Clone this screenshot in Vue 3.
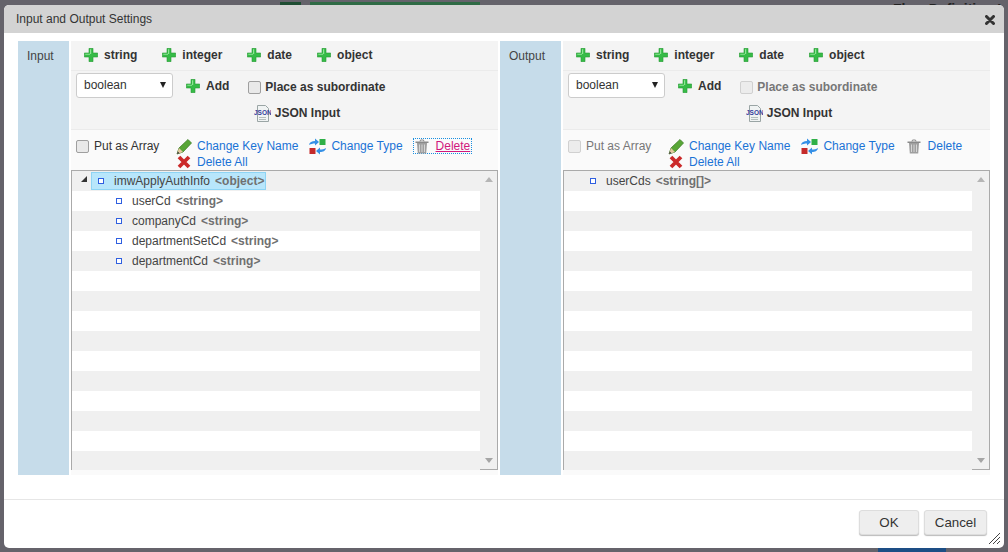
<script setup>
const types = ['string', 'integer', 'date', 'object']
const panels = [
  {
    key: 'in', label: 'Input', labelClass: 'label-in', disabled: false, focusDelete: true,
    rows: [
      { name: 'imwApplyAuthInfo', type: '<object>', level: 0, selected: true },
      { name: 'userCd', type: '<string>', level: 1 },
      { name: 'companyCd', type: '<string>', level: 1 },
      { name: 'departmentSetCd', type: '<string>', level: 1 },
      { name: 'departmentCd', type: '<string>', level: 1 },
    ],
  },
  {
    key: 'out', label: 'Output', labelClass: 'label-out', disabled: true, focusDelete: false,
    rows: [{ name: 'userCds', type: '<string[]>', level: 0, leaf: true }],
  },
]
const rowCount = 15
function rowsFor(p) {
  return Array.from({ length: rowCount }, (_, i) => p.rows[i] || null)
}
</script>

<template>
  <div class="page">
    <div class="bg-bar bar-a"></div>
    <div class="bg-bar bar-b"></div>
    <div class="bg-title">Flow Definition I</div>
    <div class="bg-bar bar-c"></div>
    <div class="dialog">
      <header class="title">
        <span>Input and Output Settings</span>
        <svg class="close" viewBox="0 0 10 10" width="10" height="10"><path d="M1.5 1.5 8.5 8.5M8.5 1.5 1.5 8.5" stroke="#333" stroke-width="3" stroke-linecap="round"/></svg>
      </header>
      <main class="body">
        <section v-for="p in panels" :key="p.key" class="panel">
          <div class="side" :class="p.labelClass">{{ p.label }}</div>
          <div class="content">
            <div class="row-types">
              <span v-for="t in types" :key="t" class="add-type">
                <svg class="plus" viewBox="0 0 14 14" width="14" height="14"><path d="M5 0.300h4V5h4.700v4H9v4.700H5V9H0.300V5H5z" fill="#36bb47" stroke="#2a9a38" stroke-width=".6"/><path d="M6 1.300h1.200V6H6zM1.300 5.800H6v1H1.300z" fill="#8fe595"/></svg>
                <b>{{ t }}</b>
              </span>
            </div>
            <div class="row-add">
              <div class="add-line">
                <div class="select-wrap">
                  <select class="type-select"><option>boolean</option></select>
                  <i class="select-arrow"></i>
                </div>
                <span class="add-btn">
                  <svg class="plus" viewBox="0 0 14 14" width="14" height="14"><path d="M5 0.300h4V5h4.700v4H9v4.700H5V9H0.300V5H5z" fill="#36bb47" stroke="#2a9a38" stroke-width=".6"/><path d="M6 1.300h1.200V6H6zM1.300 5.800H6v1H1.300z" fill="#8fe595"/></svg>
                  <b>Add</b>
                </span>
                <label class="check" :class="{ off: p.disabled }">
                  <span class="box"></span>
                  <b>Place as subordinate</b>
                </label>
              </div>
              <div class="json-line">
                <svg viewBox="0 0 17 17" width="17" height="17">
                  <path d="M3.500 .5h8l3 3v13h-11z" fill="#f0f3f3" stroke="#9aa5a5"/>
                  <path d="M5 12.500h7M5 14.500h7" stroke="#b5bdbd"/>
                  <text x="0" y="9.500" font-size="6.500" font-weight="700" font-family="Liberation Sans" fill="#33409c">JSON</text>
                </svg>
                <b>JSON Input</b>
              </div>
            </div>
            <div class="row-actions">
              <label class="check array" :class="{ off: p.disabled }">
                <span class="box"></span>
                <span>Put as Array</span>
              </label>
              <div class="actions">
                <a class="action">
                  <svg viewBox="0 0 17 17" width="17" height="17">
                    <path d="M1 16 3 10 12 1.500 15.500 5 7 14z" fill="#58a636" stroke="#3f7f28" stroke-width=".8"/>
                    <path d="M1 16 3 10 7 14z" fill="#e4c9a0"/>
                    <path d="M1 16 1.800 13.500 3.500 15.200z" fill="#333"/>
                  </svg>
                  <span>Change Key Name</span>
                </a>
                <a class="action type-action">
                  <svg viewBox="0 0 17 17" width="17" height="17">
                    <rect x="10.500" y="1" width="6" height="6" fill="#2fb048"/>
                    <rect x=".5" y="10" width="6" height="6" fill="#c42a2a"/>
                    <path d="M0 7C.5 4 3 3 6 3V.5L10 4 6 7.500V5.500C3.500 5.500 2 6 0 7z" fill="#3590e6"/>
                    <path d="M17 10c-.5 3-3 4-6 4v2.500L7 13l4-3.500v2c2.500 0 4-.5 6-1.500z" fill="#3590e6"/>
                  </svg>
                  <span>Change Type</span>
                </a>
                <a class="action delete" :class="{ focused: p.focusDelete }">
                  <svg viewBox="0 0 14 15" width="14" height="15">
                    <path d="M.5 2.500h13v1.500H.5z" fill="#8a8a8a"/><path d="M5 2.500 5.500 1h3L9 2.500" fill="none" stroke="#8a8a8a"/>
                    <path d="M2 4h10l-.8 10.500H2.800z" fill="#9f9f9f"/>
                    <path d="M4.500 5.500v7.500M7 5.500v7.500M9.500 5.500v7.500" stroke="#dcdcdc" stroke-width=".9"/>
                  </svg>
                  <span class="delete-text">Delete</span>
                </a>
                <a class="action all">
                  <svg viewBox="0 0 14 14" width="14" height="14"><path d="M2 2 12 12M12 2 2 12" stroke="#cb2a2a" stroke-width="3.800"/></svg>
                  <span>Delete All</span>
                </a>
              </div>
            </div>
            <div class="tree">
              <div class="tree-rows">
                <div v-for="(r, i) in rowsFor(p)" :key="i" class="tree-row" :class="{ odd: i % 2 === 0 }">
                  <template v-if="r">
                    <div class="node" :class="'lvl' + r.level">
                      <span v-if="r.selected" class="twist"></span>
                      <div class="node-inner" :class="{ selected: r.selected }">
                        <i class="square"></i>
                        <span class="name">{{ r.name }}</span>
                        <span class="type">{{ r.type }}</span>
                      </div>
                    </div>
                  </template>
                </div>
              </div>
              <div class="scrollbar">
                <span class="arrow up"></span>
                <span class="arrow down"></span>
              </div>
            </div>
            <div class="foot-strip"></div>
          </div>
        </section>
      </main>
      <footer class="footer">
        <button class="btn ok">OK</button>
        <button class="btn cancel">Cancel</button>
        <svg class="grip" viewBox="0 0 12 12" width="12" height="12"><path d="M1 12 12 1M5 12 12 5M9 12 12 9" stroke="#444" stroke-width="1"/></svg>
      </footer>
    </div>
  </div>
</template>

<style scoped>
.page {
  position: relative;
  width: 1008px;
  height: 552px;
  box-sizing: border-box;
  padding: 5px 4px 4px;
  background: #65636b;
  overflow: hidden;
  font-family: "Liberation Sans", Arial, sans-serif;
  font-size: 12px;
  color: #333;
}
.bg-bar { position: absolute; }
.bar-a { left: 280px; top: 2px; width: 21px; height: 3px; background: #1f4e33; }
.bar-b { left: 310px; top: 2px; width: 170px; height: 3px; background: #2f6b45; }
.bar-c { left: 878px; top: 548px; width: 68px; height: 4px; background: #1d4e85; }
.bg-title { position: absolute; left: 893px; top: 1px; font-size: 14px; font-weight: 700; color: #222; white-space: nowrap; }
.dialog {
  position: relative;
  display: flex;
  flex-direction: column;
  height: 543px;
  background: #fff;
  border-radius: 5px;
  overflow: hidden;
}
.title {
  display: flex;
  align-items: center;
  justify-content: space-between;
  height: 28px;
  flex: none;
  padding: 0 9px 0 12px;
  background: #d3d3d3;
}
.close { margin-top: 1px; }
.body {
  display: flex;
  align-items: flex-start;
  gap: 2px;
  padding: 8px 14px 24px;
  flex: none;
}
.panel { display: flex; gap: 2px; height: 434px; }
.side {
  background: #c6dcea;
  padding: 8px 0 0 9px;
  box-sizing: border-box;
  line-height: 14px;
  color: #444;
}
.label-in { width: 51px; }
.label-out { width: 61px; }
.content {
  width: 427px;
  display: flex;
  flex-direction: column;
  background: #fafafa;
}
.row-types {
  display: flex;
  align-items: center;
  height: 30px;
  box-sizing: border-box;
  padding: 0 0 2px 13px;
  background: #f4f4f4;
  border-bottom: 1px solid #ebebeb;
}
.add-type { display: flex; align-items: center; gap: 6px; margin-right: 25px; }
.plus { flex: none; }
b { font-weight: 700; color: #333; }
.row-add {
  height: 59px;
  box-sizing: border-box;
  background: #f4f4f4;
  border-bottom: 1px solid #ebebeb;
  padding: 2px 0 0 5px;
}
.add-line { display: flex; align-items: center; height: 25px; }
.select-wrap { position: relative; width: 97px; height: 25px; flex: none; }
.type-select {
  appearance: none;
  display: block;
  width: 97px;
  height: 25px;
  box-sizing: border-box;
  padding: 0 0 2px 7px;
  border: 1px solid #ccc;
  border-radius: 3px;
  background: #fff;
  font-family: inherit;
  font-size: 12px;
  color: #333;
}
.select-arrow {
  position: absolute;
  right: 7px;
  top: 9px;
  width: 0;
  height: 0;
  border-left: 3px solid transparent;
  border-right: 3px solid transparent;
  border-top: 6px solid #222;
  pointer-events: none;
}
.add-btn { display: flex; align-items: center; gap: 6px; margin-left: 13px; }
.check { display: inline-flex; align-items: center; gap: 5px; }
.add-btn + .check { margin-left: 19px; margin-top: 3px; gap: 4px; }
.box {
  width: 11px;
  height: 11px;
  flex: none;
  border: 1px solid #9f9f9f;
  border-radius: 2px;
  background: #e9e9e9;
}
.check.off .box { border-color: #d0d0d0; background: #ececec; }
.check.off, .check.off b { color: #777; }
.json-line {
  display: flex;
  align-items: center;
  justify-content: center;
  gap: 4px;
  height: 18px;
  margin: 6px 0 0 20px;
}
.row-actions {
  display: flex;
  height: 40px;
  box-sizing: border-box;
  padding: 8px 0 0 5px;
}
.array { width: 100px; height: 14px; flex: none; align-self: flex-start; margin-top: 1px; }
.actions { display: flex; flex-wrap: wrap; align-content: flex-start; width: 320px; }
.action {
  display: inline-flex;
  align-items: center;
  height: 16px;
  gap: 4px;
  color: #1a73d6;
  margin-right: 11px;
}
.type-action { gap: 5px; margin-right: 10px; }
.action svg { flex: none; }
.action.delete { gap: 7px; padding: 0 1px; border: 1px dotted transparent; height: 14px; box-sizing: content-box; margin-right: 0; }
.action.focused { border-color: #1a8fe0; }
.focused .delete-text { color: #d0187c; text-decoration: underline; }
.action.all { gap: 6px; margin-left: 1px; }
.tree {
  display: flex;
  height: 300px;
  box-sizing: border-box;
  border: 1px solid #aaa;
  flex: none;
}
.tree-rows { width: 408px; flex: none; }
.tree-row { height: 20px; background: #fff; }
.tree-row.odd { background: #f0f0f0; }
.node { position: relative; display: flex; height: 20px; align-items: center; }
.lvl0 { padding-left: 19px; }
.lvl1 { padding-left: 37px; }
.twist {
  position: absolute;
  left: 9px;
  top: 5px;
  width: 0;
  height: 0;
  border-left: 6px solid transparent;
  border-bottom: 6px solid #333;
}
.node-inner {
  display: flex;
  align-items: center;
  height: 18px;
  padding: 0 2px 0 7px;
}
.node-inner.selected {
  background: #b8e6fb;
  outline: 1px solid #8ed4f4;
  outline-offset: -1px;
}
.square {
  width: 4px;
  height: 4px;
  border: 1px solid #2f5fe0;
  background: #fff;
  margin-right: 10px;
  flex: none;
}
.name { color: #444; margin-right: 5px; }
.type { color: #707070; font-weight: 700; }
.scrollbar {
  flex: 1;
  display: flex;
  flex-direction: column;
  justify-content: space-between;
  align-items: center;
  background: #f0f0f0;
  padding: 6px 0;
}
.arrow { width: 0; height: 0; border-left: 4px solid transparent; border-right: 4px solid transparent; }
.arrow.up { border-bottom: 5px solid #b5b5b5; }
.arrow.down { border-top: 5px solid #a5a5a5; }
.foot-strip { height: 5px; background: #fafafa; }
.footer {
  position: relative;
  flex: 1;
  display: flex;
  justify-content: flex-end;
  align-items: flex-start;
  gap: 5px;
  padding: 10px 17px 0 0;
  border-top: 1px solid #e6e6e6;
}
.btn {
  height: 25px;
  box-sizing: border-box;
  border: 1px solid #ddd;
  border-radius: 3px;
  background: #eee;
  color: #333;
  box-shadow: 0 1px 1px #bbb;
  font-family: inherit;
  font-size: 13.33px;
  padding: 0;
}
.ok { width: 60px; }
.cancel { width: 63px; }
.grip { position: absolute; right: 4px; bottom: 4px; }
</style>
